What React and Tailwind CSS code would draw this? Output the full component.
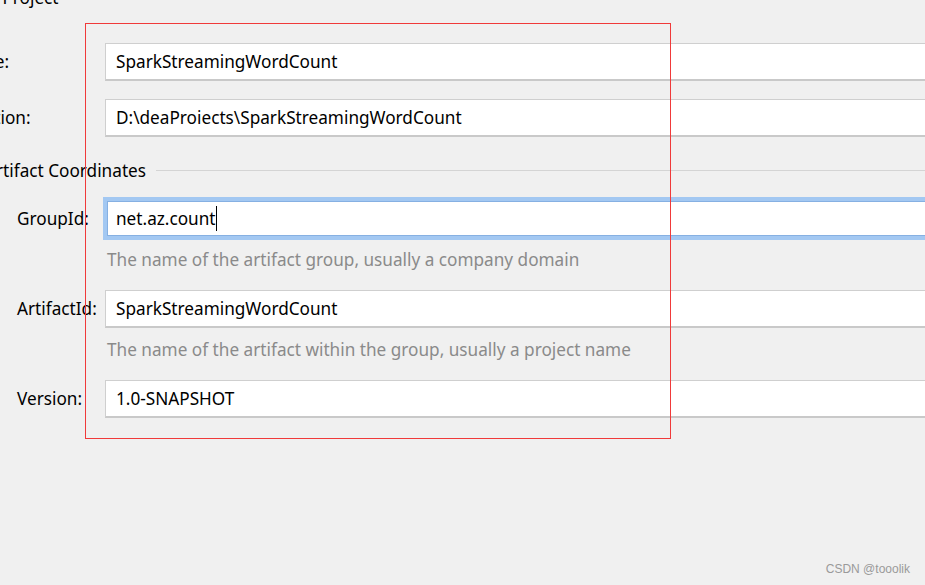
import React from "react";

const font = { fontFamily: '"Noto Sans", "Open Sans", sans-serif' };

const Field = ({ label, value, labelClass = "pl-[17px]", className = "" }) => {
  return (
    <div className={`flex items-center h-[38px] ${className}`}>
      <div className={`w-[105px] shrink-0 whitespace-nowrap ${labelClass}`}>{label}</div>
      <div className="flex items-center h-full w-[900px] shrink-0 bg-white border border-[#cfcfcf] border-b-2 border-b-[#c9c9c9] pl-[10px]">
        {value}
      </div>
    </div>
  );
};

const Hint = ({ children, className = "" }) => (
  <div className={`h-[24px] leading-[24px] pl-[107px] text-[#8a8a8a] whitespace-nowrap ${className}`}>
    {children}
  </div>
);

export default function App() {
  return (
    <div
      className="relative w-[925px] h-[585px] overflow-hidden bg-[#f0f0f0] text-[17.2px] text-black"
      style={font}
    >
      <div className="flex flex-col">
        <div className="-mt-[13px] h-[22px] leading-[22px] -ml-[38px] whitespace-nowrap">
          New Project
        </div>

        <Field className="mt-[34px]" label="Name:" labelClass="-ml-[44px] w-[149px]" value="SparkStreamingWordCount" />
        <Field
          className="mt-[18px]"
          label="Location:"
          labelClass="-ml-[43px] w-[148px]"
          value="D:\deaProiects\SparkStreamingWordCount"
        />

        <div className="mt-[22px] h-[24px] flex items-center">
          <span className="-ml-[15px] whitespace-nowrap">Artifact Coordinates</span>
          <div className="flex-1 h-px bg-[#d4d4d4] ml-[10px] mt-[-2px]"></div>
        </div>

        <div className="mt-[14px] flex items-center h-[43px]">
          <div className="w-[103px] shrink-0 pl-[17px]">GroupId:</div>
          <div className="flex items-center h-full w-[900px] shrink-0 bg-white border-[4px] border-[#a3c8f2] shadow-[inset_0_0_0_1px_#86b0e2] pl-[9px]">
            <span>net.az.count</span>
            <span className="inline-block w-px h-[25px] bg-black"></span>
          </div>
        </div>

        <Hint className="mt-[8px]">The name of the artifact group, usually a company domain</Hint>

        <Field className="mt-[18px]" label="ArtifactId:" value="SparkStreamingWordCount" />

        <Hint className="mt-[10px]">The name of the artifact within the group, usually a project name</Hint>

        <Field className="mt-[18px]" label="Version:" value="1.0-SNAPSHOT" />
      </div>

      <div className="absolute left-[85px] top-[23px] w-[586px] h-[416px] border border-[#f03a3a] pointer-events-none"></div>

      <div
        className="absolute right-[15px] bottom-[7px] text-[12px] text-[#9a9a9a]"
        style={{ fontFamily: '"Liberation Sans", Arial, sans-serif' }}
      >
        CSDN @tooolik
      </div>
    </div>
  );
}
